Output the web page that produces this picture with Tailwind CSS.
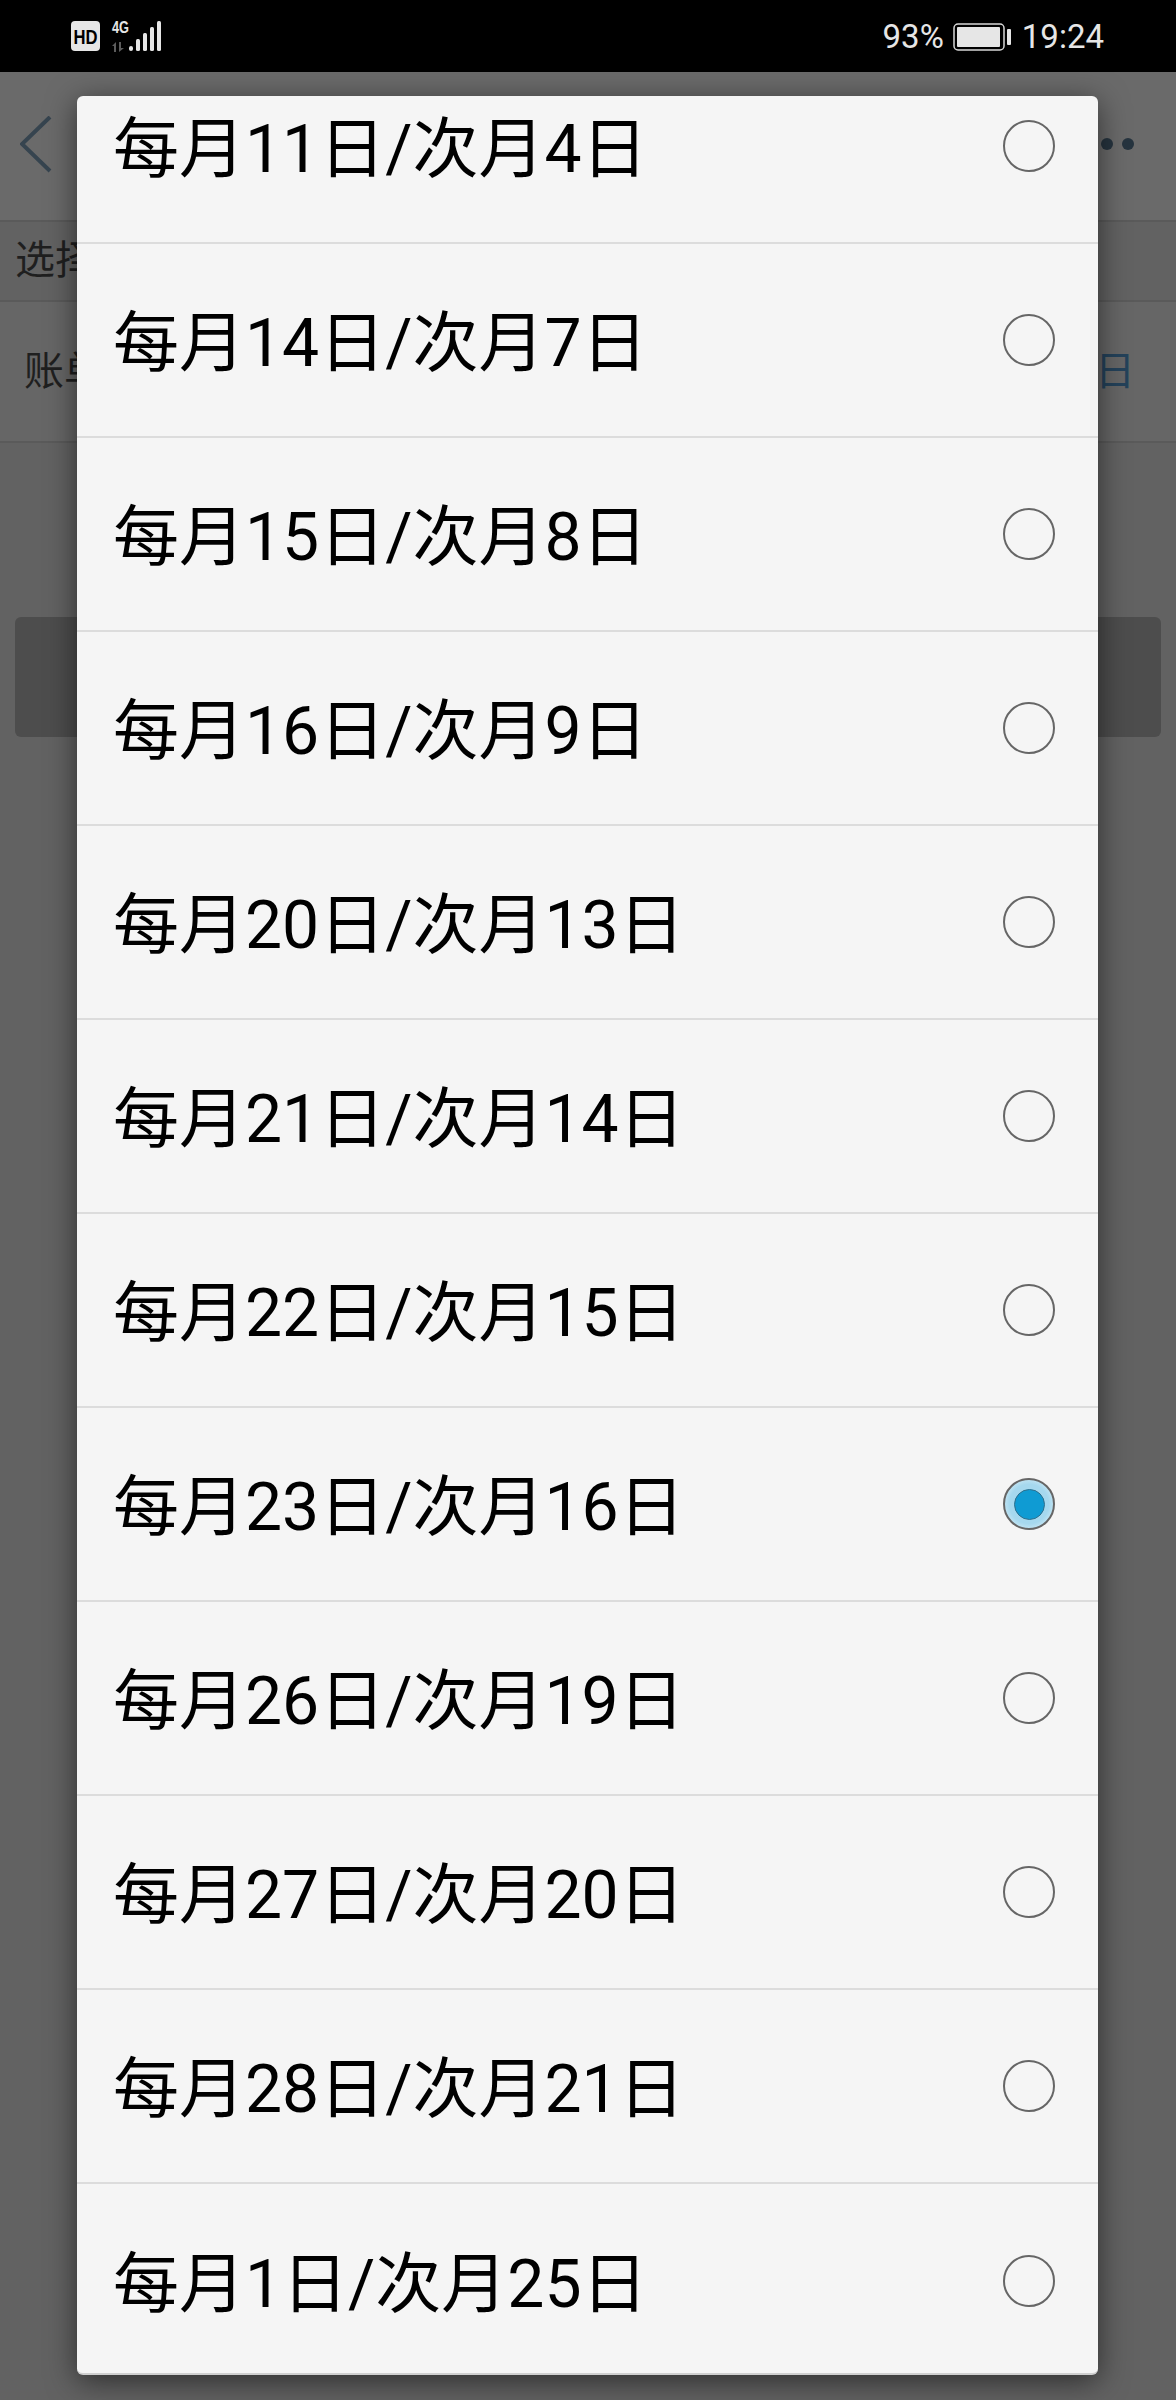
<!DOCTYPE html>
<html><head><meta charset="utf-8">
<script src="https://cdn.jsdelivr.net/npm/@tailwindcss/browser@4"></script>
</head>
<body class="m-0">
<div class="relative w-[1176px] h-[2400px] overflow-hidden bg-[#626262] font-['Roboto','Noto_Sans_CJK_SC',sans-serif]">
  <!-- status bar -->
  <div class="h-[72px] bg-black flex items-center justify-between pl-[71px] pr-[72px] text-[#e6e6e6]">
    <div class="flex items-center gap-[11px] -mt-[1px]">
      <svg class="overflow-visible" width="29" height="30" viewBox="0 0 29 30">
        <rect width="29" height="30" rx="4" fill="#e6e6e6"/>
        <text x="2.500" y="22.500" font-size="20" font-weight="700" fill="#000" font-family="Liberation Sans" textLength="24" lengthAdjust="spacingAndGlyphs">HD</text>
      </svg>
      <svg class="overflow-visible" width="50" height="32" viewBox="0 0 50 32">
        <text x="1" y="13" font-size="17" font-weight="700" fill="#e6e6e6" font-family="Liberation Sans" textLength="17" lengthAdjust="spacingAndGlyphs">4G</text>
        <path d="M1 26l4-4v10h-2v-6zM8 22h2v6l3 0-5 4z" fill="#5c5c5c"/>
        <rect x="18" y="26" width="4" height="5" rx="2" fill="#e6e6e6"/>
        <rect x="25" y="19" width="4" height="12" rx="1.500" fill="#e6e6e6"/>
        <rect x="32" y="13" width="4" height="18" rx="1.500" fill="#e6e6e6"/>
        <rect x="39" y="7" width="4" height="24" rx="1.500" fill="#e6e6e6"/>
        <rect x="46" y="1" width="4" height="30" rx="1.500" fill="#e6e6e6"/>
      </svg>
    </div>
    <div class="flex items-center text-[33px] leading-none mt-[1px]">
      <span>93%</span>
      <svg class="ml-[9px] mr-[10px]" width="59" height="28" viewBox="0 0 59 28">
        <rect x="1" y="1" width="50" height="26" rx="4" fill="none" stroke="#d8d8d8" stroke-width="1.500"/>
        <rect x="4" y="4" width="43" height="20" rx="1" fill="#e6e6e6"/>
        <rect x="54" y="6" width="4" height="16" rx="1" fill="#e6e6e6"/>
      </svg>
      <span>19:24</span>
    </div>
  </div>
  <!-- dimmed page behind -->
  <div class="h-[150px] bg-[#6a6a6a] border-b-[2px] border-[#5a5a5a] relative">
    <svg class="absolute left-[20px] top-[44px]" width="34" height="60" viewBox="0 0 34 60" fill="none"><path d="M30 1 2 28l28 27" stroke="#36444f" stroke-width="4"/></svg>
    <div class="absolute left-[1101px] top-[66px] flex gap-[9px]"><i class="block w-[12px] h-[12px] rounded-full bg-[#26343f]"></i><i class="block w-[12px] h-[12px] rounded-full bg-[#26343f]"></i></div>
  </div>
  <div class="h-[80px] border-b-[2px] border-[#5a5a5a] pl-[15px] flex items-center text-[40px] text-[#1f1f1f]">选择</div>
  <div class="h-[141px] border-b-[2px] border-[#5a5a5a] bg-[#666666] pl-[24px] pr-[41px] flex items-center justify-between text-[40px] text-[#1f1f1f]"><span>账单</span><span class="text-[#24425a]">日</span></div>
  <div class="mt-[174px] ml-[15px] mr-[15px] h-[120px] rounded-[6px] bg-[#4d4d4d]"></div>
  <!-- dialog -->
  <div class="absolute left-[77px] top-[96px] w-[1021px] h-[2279px] bg-[#f5f5f5] rounded-[6px] overflow-hidden border-b-[2px] border-[#cfcfcf] shadow-[0_6px_30px_rgba(0,0,0,0.55)]">
    <div class="-mt-[46px]">
      <div class="h-[194px] flex items-center justify-between pl-[36px] pr-[43px] border-b-[2px] border-[#dcdcdc]"><span class="pt-[8px] text-[66px] leading-none text-black">每月11日/次月4日</span><i class="block w-[52px] h-[52px] rounded-full border-[2px] border-[#666]"></i></div>
      <div class="h-[194px] flex items-center justify-between pl-[36px] pr-[43px] border-b-[2px] border-[#dcdcdc]"><span class="pt-[8px] text-[66px] leading-none text-black">每月14日/次月7日</span><i class="block w-[52px] h-[52px] rounded-full border-[2px] border-[#666]"></i></div>
      <div class="h-[194px] flex items-center justify-between pl-[36px] pr-[43px] border-b-[2px] border-[#dcdcdc]"><span class="pt-[8px] text-[66px] leading-none text-black">每月15日/次月8日</span><i class="block w-[52px] h-[52px] rounded-full border-[2px] border-[#666]"></i></div>
      <div class="h-[194px] flex items-center justify-between pl-[36px] pr-[43px] border-b-[2px] border-[#dcdcdc]"><span class="pt-[8px] text-[66px] leading-none text-black">每月16日/次月9日</span><i class="block w-[52px] h-[52px] rounded-full border-[2px] border-[#666]"></i></div>
      <div class="h-[194px] flex items-center justify-between pl-[36px] pr-[43px] border-b-[2px] border-[#dcdcdc]"><span class="pt-[8px] text-[66px] leading-none text-black">每月20日/次月13日</span><i class="block w-[52px] h-[52px] rounded-full border-[2px] border-[#666]"></i></div>
      <div class="h-[194px] flex items-center justify-between pl-[36px] pr-[43px] border-b-[2px] border-[#dcdcdc]"><span class="pt-[8px] text-[66px] leading-none text-black">每月21日/次月14日</span><i class="block w-[52px] h-[52px] rounded-full border-[2px] border-[#666]"></i></div>
      <div class="h-[194px] flex items-center justify-between pl-[36px] pr-[43px] border-b-[2px] border-[#dcdcdc]"><span class="pt-[8px] text-[66px] leading-none text-black">每月22日/次月15日</span><i class="block w-[52px] h-[52px] rounded-full border-[2px] border-[#666]"></i></div>
      <div class="h-[194px] flex items-center justify-between pl-[36px] pr-[43px] border-b-[2px] border-[#dcdcdc]"><span class="pt-[8px] text-[66px] leading-none text-black">每月23日/次月16日</span><i class="flex items-center justify-center w-[52px] h-[52px] rounded-full border-[2px] border-[#666] bg-[radial-gradient(circle,#a6d8ee_58%,#f0f8fb_100%)]"><b class="block w-[31px] h-[31px] rounded-full bg-[#0f9bd3] border border-[#2f6f8c]"></b></i></div>
      <div class="h-[194px] flex items-center justify-between pl-[36px] pr-[43px] border-b-[2px] border-[#dcdcdc]"><span class="pt-[8px] text-[66px] leading-none text-black">每月26日/次月19日</span><i class="block w-[52px] h-[52px] rounded-full border-[2px] border-[#666]"></i></div>
      <div class="h-[194px] flex items-center justify-between pl-[36px] pr-[43px] border-b-[2px] border-[#dcdcdc]"><span class="pt-[8px] text-[66px] leading-none text-black">每月27日/次月20日</span><i class="block w-[52px] h-[52px] rounded-full border-[2px] border-[#666]"></i></div>
      <div class="h-[194px] flex items-center justify-between pl-[36px] pr-[43px] border-b-[2px] border-[#dcdcdc]"><span class="pt-[8px] text-[66px] leading-none text-black">每月28日/次月21日</span><i class="block w-[52px] h-[52px] rounded-full border-[2px] border-[#666]"></i></div>
      <div class="h-[194px] flex items-center justify-between pl-[36px] pr-[43px]"><span class="pt-[8px] text-[66px] leading-none text-black">每月1日/次月25日</span><i class="block w-[52px] h-[52px] rounded-full border-[2px] border-[#666]"></i></div>
    </div>
  </div>
</div>
</body></html>
